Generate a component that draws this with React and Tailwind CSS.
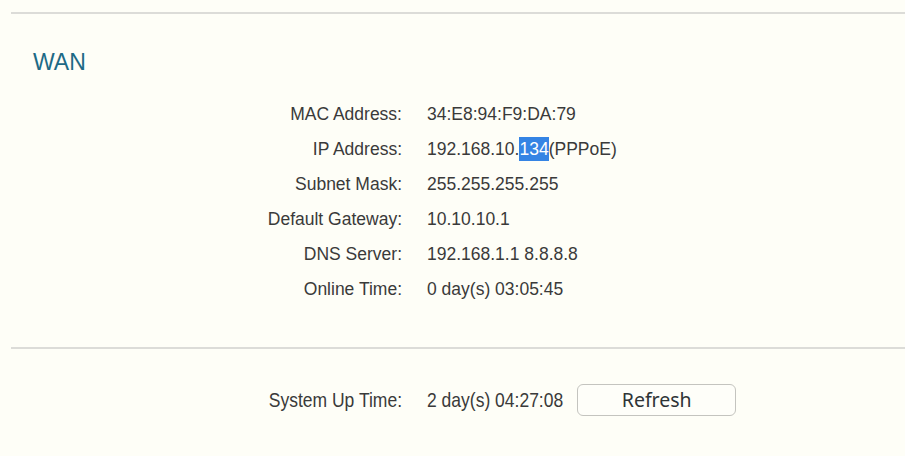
import React from "react";

const rows = [
  { label: "MAC Address:", value: "34:E8:94:F9:DA:79" },
  { label: "IP Address:", value: "ip" },
  { label: "Subnet Mask:", value: "255.255.255.255" },
  { label: "Default Gateway:", value: "10.10.10.1" },
  { label: "DNS Server:", value: "192.168.1.1 8.8.8.8" },
  { label: "Online Time:", value: "0 day(s) 03:05:45" },
];

export default function App() {
  return (
    <div className="w-[905px] h-[456px] bg-[#fefef7] pt-[12px] pl-[11px] overflow-hidden font-['Liberation_Sans',Arial,sans-serif] text-[#3a3a3a]">
      <div className="border-t-2 border-[#dcdcd8]" />
      <h2 className="pl-[22px] mt-[35px] text-[23px] leading-[26px] text-[#1d6a86]">WAN</h2>
      <div className="mt-[22px] grid grid-cols-[391px_1fr] gap-x-[25px] text-[17.5px]">
        {rows.map((r) => (
          <React.Fragment key={r.label}>
            <div className="h-[35px] flex items-center justify-end">{r.label}</div>
            <div className="h-[35px] flex items-center">
              {r.value === "ip" ? (
                <span>
                  192.168.10.
                  <span className="bg-[#3584e4] text-white py-[2px]">134</span>
                  (PPPoE)
                </span>
              ) : (
                r.value
              )}
            </div>
          </React.Fragment>
        ))}
      </div>
      <div className="mt-[40px] border-t-2 border-[#dcdcd8]" />
      <div className="mt-[35px] grid grid-cols-[391px_auto] gap-x-[25px] items-center justify-start text-[17.5px]">
        <div className="text-right">
          <span className="inline-block scale-y-[1.2]">System Up Time:</span>
        </div>
        <div className="flex items-center gap-[14px]">
          <span className="inline-block scale-y-[1.2]">2 day(s) 04:27:08</span>
          <button className="w-[159px] h-[32px] rounded-[6px] border border-[#c4c4bf] bg-[#fefef9] text-[19.5px] text-[#2e3436] font-['Noto_Sans',sans-serif] leading-none">
            Refresh
          </button>
        </div>
      </div>
    </div>
  );
}
